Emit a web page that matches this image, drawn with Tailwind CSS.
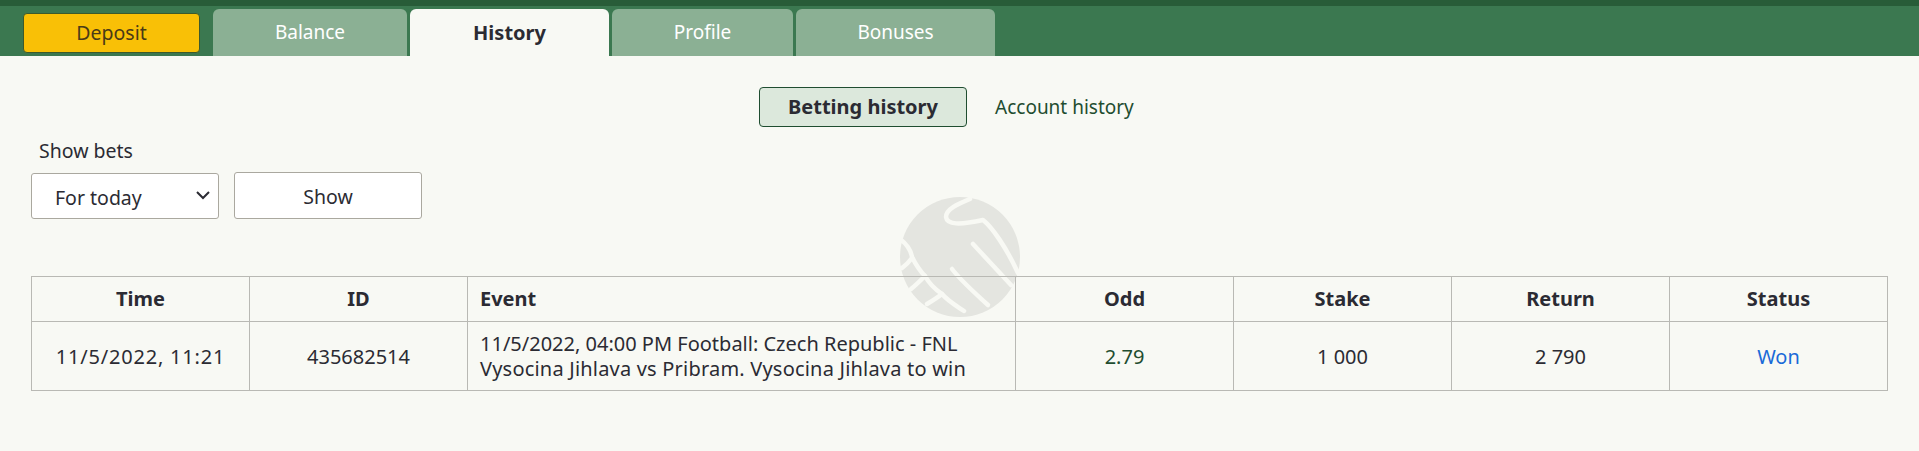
<!DOCTYPE html>
<html lang="en">
<head>
    <meta charset="UTF-8">
    <title>History</title>
    <script src="https://cdn.jsdelivr.net/npm/@tailwindcss/browser@4"></script>
</head>
<body class="bg-[#f8f9f4] min-h-screen font-['Noto_Sans',sans-serif] text-[19px] text-[#2b2b33]">
    <!-- Header -->
    <header class="bg-[#3b7850] border-t-[6px] border-[#285c38] h-[56px] pl-[23px] flex items-end">
        <button class="w-[177px] h-[40px] mb-[3px] mr-[13px] bg-[#f9c006] border border-[#3d5a2c] rounded-[4px] text-[#4a3a17] text-[19.5px]">Deposit</button>
        <nav class="flex gap-[3px]">
            <a class="w-[194px] h-[47px] flex items-center justify-center rounded-t-[6px] bg-[#8bb094] text-white">Balance</a>
            <a class="w-[199px] h-[47px] flex items-center justify-center rounded-t-[6px] bg-[#f8f9f4] font-bold text-[20px]">History</a>
            <a class="w-[181px] h-[47px] flex items-center justify-center rounded-t-[6px] bg-[#8bb094] text-white">Profile</a>
            <a class="w-[199px] h-[47px] flex items-center justify-center rounded-t-[6px] bg-[#8bb094] text-white">Bonuses</a>
        </nav>
    </header>

    <main class="relative px-[31px]">
        <!-- Watermark -->
        <svg class="absolute left-[900px] top-[110px] w-[120px] h-[120px]" viewBox="0 0 120 120" fill="none">
            <circle cx="60" cy="60" r="60" fill="#e4e5e0"/>
            <g stroke="#f8f9f4" stroke-width="4.5" stroke-linecap="round" stroke-linejoin="round">
                <path d="M70 2 C58 7 46 12 46 20 C47 28 60 28 83 23 C92 30 106 50 118 76"/>
                <path d="M73 47 L111 88"/>
                <path d="M52 72 C62 85 75 96 88 108"/>
                <path d="M0 42 C8 48 11 54 12 60 C16 68 20 74 25 79 C30 88 36 93 42 97 C48 104 55 108 64 114"/>
                <path d="M12 61 C9 65 6 68 2 71"/>
                <path d="M25 79 C20 84 16 88 11 92"/>
                <path d="M42 97 C37 101 32 104 27 107"/>
            </g>
        </svg>

        <div class="relative flex items-center h-[40px] mt-[31px] pl-[728px]">
            <a class="w-[208px] h-[40px] flex items-center justify-center bg-[#dce8dc] border border-[#1f4d30] rounded-[4px] font-bold text-[20px]">Betting history</a>
            <a class="ml-[28px] text-[#1f4d30]">Account history</a>
        </div>

        <div class="relative mt-[11px]">
            <div class="pl-[8px] h-[24px] leading-[24px] pt-px text-[19.5px]">Show bets</div>
            <div class="flex items-start gap-[15px] mt-[10px] text-[19.5px]">
                <div class="relative w-[188px] h-[46px] mt-px">
                    <select class="appearance-none w-full h-full pl-[23px] pt-[3px] bg-white border border-[#aaa89f] rounded-[3px]">
                        <option>For today</option>
                    </select>
                    <svg class="absolute right-[9px] top-[18px] w-[14px] h-[9px]" viewBox="0 0 14 9" fill="none" stroke="#2b2b33" stroke-width="2"><path d="M1 1l6 6 6-6"/></svg>
                </div>
                <button class="w-[188px] h-[47px] pt-[3px] bg-white border border-[#aaa89f] rounded-[3px]">Show</button>
            </div>
        </div>

        <table class="relative mt-[57px] w-[1857px] table-fixed border-collapse text-[20px]">
            <thead>
                <tr class="h-[45px] font-bold">
                    <th class="w-[218px] border border-[#b9b9b4]">Time</th>
                    <th class="w-[218px] border border-[#b9b9b4]">ID</th>
                    <th class="border border-[#b9b9b4] text-left pl-[12px]">Event</th>
                    <th class="w-[218px] border border-[#b9b9b4]">Odd</th>
                    <th class="w-[218px] border border-[#b9b9b4]">Stake</th>
                    <th class="w-[218px] border border-[#b9b9b4]">Return</th>
                    <th class="w-[218px] border border-[#b9b9b4]">Status</th>
                </tr>
            </thead>
            <tbody>
                <tr class="h-[69px] text-center">
                    <td class="border border-[#b9b9b4] pt-[2px] tracking-[0.8px]">11/5/2022, 11:21</td>
                    <td class="border border-[#b9b9b4] pt-[2px]">435682514</td>
                    <td class="border border-[#b9b9b4] text-left pl-[12px] leading-[25px]">11/5/2022, 04:00 PM Football: Czech Republic - FNL<br><span class="tracking-[0.2px]">Vysocina Jihlava vs Pribram. Vysocina Jihlava to win</span></td>
                    <td class="border border-[#b9b9b4] pt-[2px] text-[#1f4d30]">2.79</td>
                    <td class="border border-[#b9b9b4] pt-[2px]">1 000</td>
                    <td class="border border-[#b9b9b4] pt-[2px]">2 790</td>
                    <td class="border border-[#b9b9b4] pt-[2px] text-[#1a6ad8]">Won</td>
                </tr>
            </tbody>
        </table>
    </main>
</body>
</html>
